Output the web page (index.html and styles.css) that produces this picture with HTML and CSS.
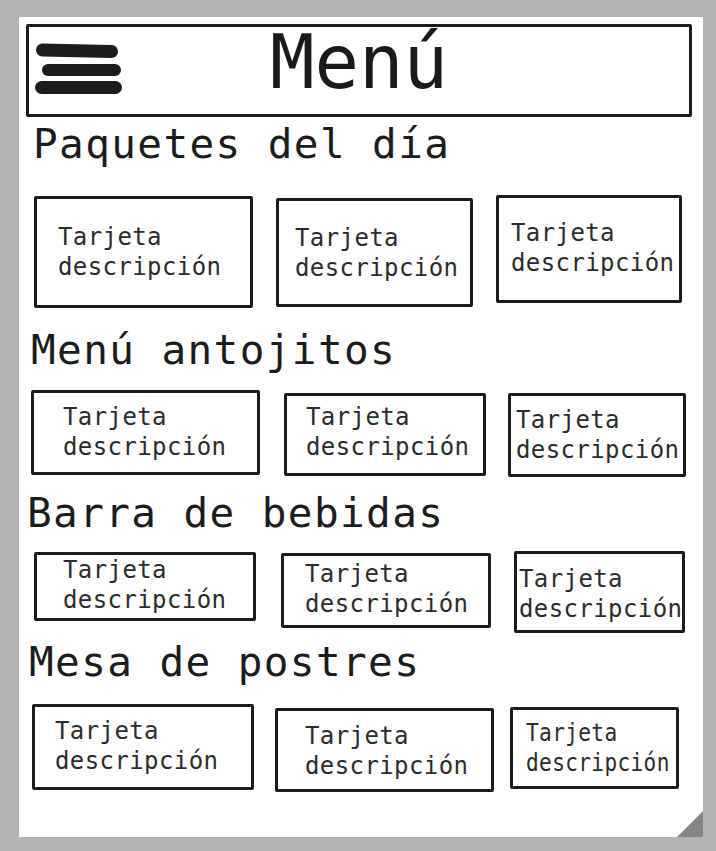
FILE: index.html
```html
<!DOCTYPE html>
<html lang="es">
<head>
<meta charset="utf-8">
<title>Menú</title>
<link rel="stylesheet" href="styles.css">
</head>
<body>
<div class="sheet">
  <header class="topbar">
    <svg class="burger" width="90" height="56" viewBox="0 0 90 56" aria-hidden="true">
      <line x1="9.5" y1="9" x2="78.5" y2="10.5" stroke="#1c1c1c" stroke-width="13" stroke-linecap="round"/>
      <line x1="15" y1="29" x2="82" y2="29" stroke="#1c1c1c" stroke-width="12" stroke-linecap="round"/>
      <line x1="8.5" y1="46.5" x2="82.5" y2="46.5" stroke="#1c1c1c" stroke-width="13" stroke-linecap="round"/>
    </svg>
    <h1 class="title">Menú</h1>
  </header>

  <h2 class="section-title st-1">Paquetes del día</h2>
  <div class="cards row-1">
    <div class="card">Tarjeta<br>descripción</div>
    <div class="card">Tarjeta<br>descripción</div>
    <div class="card">Tarjeta<br>descripción</div>
  </div>

  <h2 class="section-title st-2">Menú antojitos</h2>
  <div class="cards row-2">
    <div class="card">Tarjeta<br>descripción</div>
    <div class="card">Tarjeta<br>descripción</div>
    <div class="card">Tarjeta<br>descripción</div>
  </div>

  <h2 class="section-title st-3">Barra de bebidas</h2>
  <div class="cards row-3">
    <div class="card">Tarjeta<br>descripción</div>
    <div class="card">Tarjeta<br>descripción</div>
    <div class="card">Tarjeta<br>descripción</div>
  </div>

  <h2 class="section-title st-4">Mesa de postres</h2>
  <div class="cards row-4">
    <div class="card">Tarjeta<br>descripción</div>
    <div class="card">Tarjeta<br>descripción</div>
    <div class="card"><span class="squeeze">Tarjeta<br>descripción</span></div>
  </div>

  <div class="fold"></div>
</div>
</body>
</html>
```

FILE: styles.css
```css
* { box-sizing: border-box; }
html, body { margin: 0; }
body {
  background: #b3b3b3;
  font-family: "DejaVu Sans Mono", "Liberation Mono", monospace;
  color: #1c1c1c;
}

.sheet {
  position: relative;
  margin: 17px 13px 0 19px;
  height: 820px;
  background: #fff;
  padding-top: 7px;
}

.topbar {
  margin-left: 7px;
  width: 666px;
  height: 93px;
  border: 3px solid #1c1c1c;
  border-radius: 2px;
  display: grid;
  grid-template-columns: 1fr auto 1fr;
  align-items: start;
}
.burger {
  grid-column: 1;
  justify-self: start;
  margin: 14px 0 0 4px;
  display: block;
}
.title {
  grid-column: 2;
  margin: -2px 0 0 0;
  font-size: 74px;
  line-height: 74px;
  font-weight: 400;
  color: #1a1a1a;
}

.section-title {
  margin: 0;
  font-size: 41px;
  line-height: 41px;
  font-weight: 400;
  letter-spacing: 1.4px;
  color: #1c1c1c;
}
.st-1 { margin: 7px 0 0 14px; }
.st-2 { margin: 22px 0 0 12px; }
.st-3 { margin: 16px 0 0 8px; }
.st-4 { margin: 9px 0 0 10px; }

.cards {
  display: flex;
  align-items: flex-start;
}
.row-1 { margin-top: 30px; }
.row-2 { margin-top: 19px; }
.row-3 { margin-top: 17px; }
.row-4 { margin-top: 21px; }

.card {
  flex: none;
  border: 3px solid #1c1c1c;
  border-radius: 2px;
  font-size: 24px;
  line-height: 30px;
  letter-spacing: 0.4px;
  color: #2b2b2b;
  white-space: nowrap;
}
.squeeze {
  display: inline-block;
  transform: scaleX(0.88);
  transform-origin: left top;
}

/* Paquetes del día */
.row-1 .card:nth-child(1) { margin: 1px 0 0 15px; width: 219px; height: 112px; padding: 23px 0 0 21px; }
.row-1 .card:nth-child(2) { margin: 3px 0 0 23px; width: 197px; height: 109px; padding: 22px 0 0 16px; }
.row-1 .card:nth-child(3) { margin: 0 0 0 23px; width: 186px; height: 108px; padding: 20px 0 0 12px; }

/* Menú antojitos */
.row-2 .card:nth-child(1) { margin: 0 0 0 12px; width: 229px; height: 85px; padding: 9px 0 0 29px; }
.row-2 .card:nth-child(2) { margin: 3px 0 0 24px; width: 202px; height: 83px; padding: 6px 0 0 19px; }
.row-2 .card:nth-child(3) { margin: 3px 0 0 22px; width: 178px; height: 84px; padding: 9px 0 0 5px; }

/* Barra de bebidas */
.row-3 .card:nth-child(1) { margin: 1px 0 0 15px; width: 222px; height: 69px; padding: 0 0 0 26px; }
.row-3 .card:nth-child(2) { margin: 2px 0 0 25px; width: 210px; height: 75px; padding: 3px 0 0 21px; }
.row-3 .card:nth-child(3) { margin: 0 0 0 23px; width: 171px; height: 82px; padding: 10px 0 0 2px; }

/* Mesa de postres */
.row-4 .card:nth-child(1) { margin: 0 0 0 13px; width: 222px; height: 86px; padding: 9px 0 0 20px; }
.row-4 .card:nth-child(2) { margin: 4px 0 0 21px; width: 219px; height: 84px; padding: 10px 0 0 27px; }
.row-4 .card:nth-child(3) { margin: 3px 0 0 16px; width: 169px; height: 82px; padding: 8px 0 0 13px; }

.fold {
  position: absolute;
  right: 0;
  bottom: 0;
  width: 26px;
  height: 26px;
  background: #858585;
  clip-path: polygon(100% 0, 100% 100%, 0 100%);
}
```
